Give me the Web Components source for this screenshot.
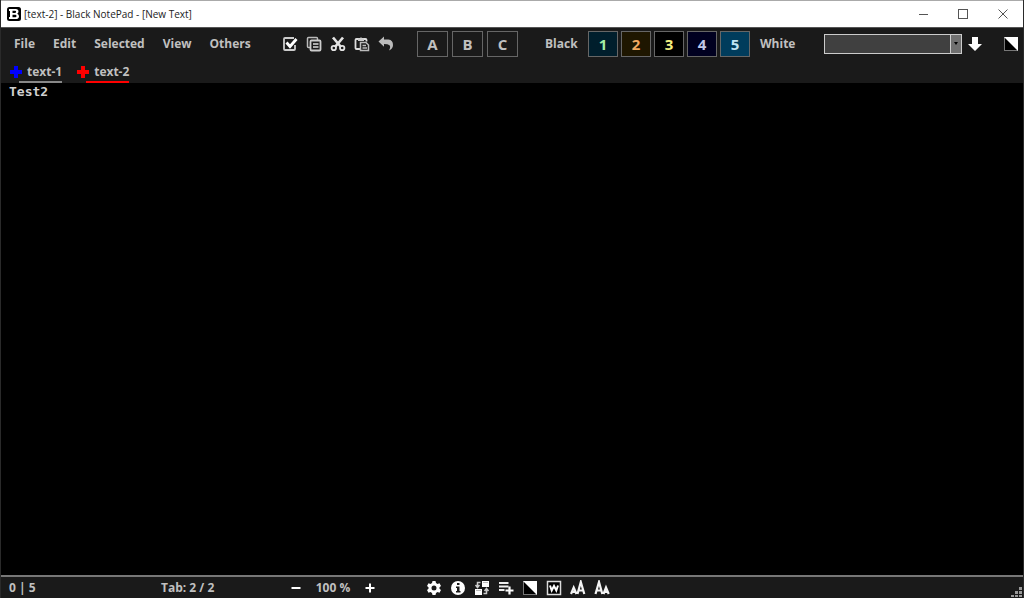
<!DOCTYPE html>
<html lang="en">
<head>
<meta charset="utf-8">
<title>[text-2] - Black NotePad - [New Text]</title>
<style>
html, body { margin: 0; height: 100%; background: #000; }
body { font-family: "Open Sans", "Noto Sans", sans-serif; }
</style>
</head>
<body>
<note-app></note-app>
<script>
const define = (name, html, setup) => customElements.define(name, class extends HTMLElement {
  constructor() {
    super();
    this.attachShadow({ mode: 'open' });
  }
  connectedCallback() {
    this.shadowRoot.innerHTML = html;
    if (setup) setup(this, this.shadowRoot);
  }
});

const ICONS = {
  logo: '<rect x="1" y="1" width="14" height="14" rx="2.500" fill="#000"/><path fill="#fff" fill-rule="evenodd" d="M3 3H9.800q2.700 0 2.700 2.600 0 1.500-1.300 2.200Q13 8.500 13 10.200q0 2.800-3.200 2.800H3v-2h1V5H3zM6.500 4.800v2.100h2.600q1 0 1-1.050T9.100 4.800zM6.500 8.800v2.400h2.800q1.200 0 1.200-1.200T9.300 8.800z"/>',
  check: '<path d="M13 9v4q0 1-1 1H3q-1 0-1-1V3q0-1 1-1h9" fill="none" stroke="#ccc" stroke-width="1.800"/><path d="M4.500 6.500l3.500 4L14.500 3" fill="none" stroke="#fff" stroke-width="2.800"/>',
  copy: '<path d="M4 11.500H2.500q-1 0-1-1V2.500q0-1 1-1h8q1 0 1 1V4" fill="none" stroke="#bbb" stroke-width="1.500"/><rect x="4.500" y="4.500" width="10" height="10" rx="1" fill="none" stroke="#ccc" stroke-width="1.800"/><path d="M7 8h5.500M7 11h5.500" stroke="#ddd" stroke-width="1.500"/>',
  cut: '<g fill="none" stroke="#e4e4e4"><path d="M3 1.500l8 9.500M13 1.500L5 11" stroke-width="2.700"/><circle cx="3.800" cy="12" r="2.200" stroke-width="1.800"/><circle cx="12.200" cy="12" r="2.200" stroke-width="1.800"/></g>',
  paste: '<path d="M6 13H2.500q-1 0-1-1V4q0-1 1-1h9q1 0 1 1v1.500" fill="none" stroke="#ddd" stroke-width="1.800"/><path d="M4 5V2.500h2q1-2.500 2 0h2V5z" fill="#ccc"/><path d="M6.500 6.500h5.500l2.500 2.500v5.500h-8z" fill="#1a1a1a" stroke="#bbb" stroke-width="1.500"/><path d="M8.500 9.500H12M8.500 12H13" stroke="#bbb" stroke-width="1.300"/>',
  undo: '<path d="M.5 5.500L6 .5v3h4.500Q15 4 15 9q0 3.500-4 5.500 2-3.500.5-5.200Q10 8 6 8v2.800z" fill="#bbb"/>',
  down: '<path d="M5 1h6v7h4l-7 7-7-7h4z" fill="#fff"/>',
  contrast: '<rect x="1.500" y="1.500" width="13" height="13" fill="#000" stroke="#777"/><path d="M1 1h14v14z" fill="#fff"/>',
  gear: '<path fill="#fff" fill-rule="evenodd" d="M6.500 1h3l.5 2 1.500.9 2-.6L15 5.900l-1.500 1.300v1.600l1.500 1.300-1.500 2.600-2-.6L10 13l-.5 2h-3L6 13l-1.500-.9-2 .6L1 10.100l1.500-1.300V7.200L1 5.900l1.500-2.600 2 .6L6 3zM8 5.500a2.500 2.500 0 1 0 0 5 2.500 2.500 0 0 0 0-5z"/>',
  info: '<circle cx="8" cy="8" r="7" fill="#fff"/><path d="M7 3h2.500v2H7zM6 6.500h3.500v4.500h1v1.500H6V11h1V8H6z" fill="#1a1a1a"/>',
  swap: '<path d="M8 1h7v6H8zM1 9h7v6H1z" fill="#fff"/><path d="M9 2.500h5M2 10.500h5" stroke="#bbb"/><path d="M6.500 2.500H3.500V7M1.500 5l2 2.500 2-2.500M9.500 13.500h3V9.500M10.500 11l2-2.500 2 2.500" fill="none" stroke="#ccc" stroke-width="1.500"/>',
  add: '<path d="M1 3h9.500M1 6.500h9.500M1 10h5.500" stroke="#eee" stroke-width="2.200"/><path d="M7.500 10.500h8M11.500 6.500v8" stroke="#fff" stroke-width="2.200"/>',
  word: '<rect x="1.500" y="1.500" width="13" height="13" fill="#000" stroke="#ddd" stroke-width="1.500"/><path d="M4 5.500l1.700 5L8 6l2.300 4.500 1.700-5" fill="none" stroke="#fff" stroke-width="2"/>',
  grow: '<path d="M1 14l2.700-6.500L6.500 14M2 12h3.500M7.500 14l3.300-12 3.500 12M8.500 10.500h4.500" fill="none" stroke="#f4f4f4" stroke-width="2.200"/>',
  shrink: '<path d="M1.500 14L5 2l3.300 12M2.500 10.500H7M9.500 14l2.500-6.500 2.700 6.500M10.500 12h3.500" fill="none" stroke="#f4f4f4" stroke-width="2.200"/>',
  plus: '<path d="M8 3.500v9M3.500 8h9" stroke="#fff" stroke-width="2"/>',
  minus: '<path d="M3.500 8h9" stroke="#fff" stroke-width="2"/>',
  cross: '<path d="M8 2v12M2 8h12" stroke="currentColor" stroke-width="4"/>',
  min: '<path d="M4 8.500h9" stroke="#555"/>',
  max: '<rect x="3.500" y="3.500" width="9" height="9" fill="none" stroke="#555"/>',
  close: '<path d="M3.500 3.500l9 9M12.500 3.500l-9 9" stroke="#555"/>',
  grip: '<path d="M12 5h3v3h-3zM8 9h3v3H8zM12 9h3v3h-3zM4 13h3v2H4zM8 13h3v2H8zM12 13h3v2h-3z" fill="#999"/>'
};

define('note-icon', `<style>
:host { display: block; width: 16px; height: 16px; flex: none; }
svg { display: block; }
</style><svg width="16" height="16" viewBox="0 0 16 16" aria-hidden="true"></svg>`,
  (host, root) => { root.querySelector('svg').innerHTML = ICONS[host.getAttribute('name')] || ''; });

define('icon-button', `<style>
:host { display: block; flex: none; }
button { display: block; padding: 0; border: 0; background: none; color: inherit; }
</style><button><note-icon></note-icon></button>`,
  (host, root) => {
    root.querySelector('button').setAttribute('aria-label', host.getAttribute('label'));
    root.querySelector('note-icon').setAttribute('name', host.getAttribute('icon'));
    root.querySelector('note-icon').connectedCallback();
  });

define('menu-item', `<style>
:host { display: block; flex: none; }
button { display: block; padding: 0; border: 0; background: none; color: #c0c0c0; font: 700 12px/20px "Open Sans", "Noto Sans", sans-serif; white-space: nowrap; }
</style><button><slot></slot></button>`);

define('box-button', `<style>
:host { display: block; flex: none; width: 31px; --back: #1a1a1a; --ink: #c0c0c0; }
button { display: block; box-sizing: border-box; width: 100%; height: 26px; padding: 0; border: 1px solid #666; background: var(--back); color: var(--ink); font: 700 15px/24px "Open Sans", "Noto Sans", sans-serif; }
</style><button><slot></slot></button>`);

define('title-bar', `<style>
:host { display: flex; align-items: center; height: 26px; padding: 0 12px 0 5px; border-top: 1px solid #aaa; background: #fff; color: #222; }
h1 { flex: 1; margin: 0 0 0 2px; font: 400 10px/16px "Open Sans", "Noto Sans", sans-serif; }
nav { display: flex; gap: 24px; }
</style><note-icon name="logo"></note-icon><h1><slot></slot></h1>
<nav><icon-button icon="min" label="Minimize"></icon-button><icon-button icon="max" label="Maximize"></icon-button><icon-button icon="close" label="Close"></icon-button></nav>`);

define('tool-bar', `<style>
:host { display: flex; align-items: center; height: 31px; padding: 0 4px 0 13px; border-top: 1px solid #555; background: #1a1a1a; }
div { display: flex; align-items: center; flex: none; }
.menus { gap: 18px; width: 268px; }
.icons { gap: 8px; width: 135px; }
.slots { gap: 4px; width: 128px; }
.themes { gap: 3px; flex: 1 0 auto; }
.themes box-button { width: 30px; }
.name { width: 40px; }
.last { margin-left: 7px; }
.find { width: 138px; height: 20px; box-sizing: border-box; border: 1px solid #ccc; }
input { box-sizing: border-box; flex: 1; min-width: 0; height: 18px; padding: 0 3px; border: 0; background: #404040; color: #ddd; font: 12px/18px "Open Sans", sans-serif; }
.find button { width: 11px; height: 18px; padding: 0; border: 0; border-left: 1px solid #ccc; background: #707070; }
.find svg { display: block; margin: 0 auto; }
.go { margin: 0 20px 0 5px; }
</style>
<div class="menus"><menu-item>File</menu-item><menu-item>Edit</menu-item><menu-item>Selected</menu-item><menu-item>View</menu-item><menu-item>Others</menu-item></div>
<div class="icons"><icon-button icon="check" label="Select all"></icon-button><icon-button icon="copy" label="Copy"></icon-button><icon-button icon="cut" label="Cut"></icon-button><icon-button icon="paste" label="Paste"></icon-button><icon-button icon="undo" label="Undo"></icon-button></div>
<div class="slots"><box-button>A</box-button><box-button>B</box-button><box-button>C</box-button></div>
<div class="themes"><menu-item class="name">Black</menu-item>
<box-button style="--back:#001e2c;--ink:#a5f0a5">1</box-button><box-button style="--back:#1e1600;--ink:#f0a860">2</box-button><box-button style="--back:#000;--ink:#f4f080">3</box-button><box-button style="--back:#000020;--ink:#c0c8e8">4</box-button><box-button style="--back:#003c5c;--ink:#c0e4f4">5</box-button>
<menu-item class="last">White</menu-item></div>
<div class="find"><input aria-label="Find text"><button aria-label="Search history"><svg width="4" height="3"><path d="M0 0h4L2 3z" fill="#000"/></svg></button></div>
<icon-button class="go" icon="down" label="Find next"></icon-button>
<icon-button icon="contrast" label="Invert colours"></icon-button>`);

define('text-tab', `<style>
:host { display: block; flex: none; --mark: #00f; --line: #888; }
button { display: flex; align-items: center; padding: 0; border: 0; background: none; color: #c0c0c0; font: 700 12px/18px "Open Sans", "Noto Sans", sans-serif; }
note-icon { color: var(--mark); margin-right: 3px; }
i { display: block; height: 2px; margin-left: 11px; background: var(--line); }
</style><button><note-icon name="cross"></note-icon><slot></slot></button><i></i>`);

define('tab-strip', `<style>
:host { display: flex; gap: 13px; height: 20px; padding: 4px 7px 0; background: #1a1a1a; }
.on { --mark: #f00; --line: #f00; }
</style><text-tab>text-1</text-tab><text-tab class="on">text-2</text-tab>`);

define('text-editor', `<style>
:host { display: flex; flex: 1; min-height: 0; background: #000; }
textarea { flex: 1; padding: 1px 8px; border: 0; outline: 0; resize: none; background: #000; color: #d0d0d0; font: 700 13px/15px "DejaVu Sans Mono", monospace; }
</style><textarea aria-label="Text" spellcheck="false"></textarea>`,
  (host, root) => { root.querySelector('textarea').value = host.getAttribute('text'); });

define('status-bar', `<style>
:host { display: flex; align-items: center; height: 21px; padding: 0 0 0 8px; border-top: 2px solid #777; background: #1a1a1a; color: #c0c0c0; font: 700 12px/20px "Open Sans", "Noto Sans", sans-serif; }
span { flex: none; }
.count { width: 152px; }
.tab { width: 127px; }
.zoom { display: flex; align-items: center; width: 138px; flex: none; }
.zoom span { width: 58px; text-align: center; }
.icons { display: flex; flex: 1; gap: 8px; }
.grip { align-self: flex-end; }
</style><span class="count">0 | 5</span><span class="tab">Tab: 2 / 2</span>
<div class="zoom"><icon-button icon="minus" label="Zoom out"></icon-button><span>100 %</span><icon-button icon="plus" label="Zoom in"></icon-button></div>
<div class="icons"><icon-button icon="gear" label="Settings"></icon-button><icon-button icon="info" label="About"></icon-button><icon-button icon="swap" label="Swap"></icon-button><icon-button icon="add" label="Add line"></icon-button><icon-button icon="contrast" label="Invert colours"></icon-button><icon-button icon="word" label="Word wrap"></icon-button><icon-button icon="grow" label="Larger text"></icon-button><icon-button icon="shrink" label="Smaller text"></icon-button></div>
<note-icon class="grip" name="grip"></note-icon>`);

define('note-app', `<style>
:host { display: flex; flex-direction: column; height: 100vh; box-sizing: border-box; border-left: 1px solid #2a2a2a; border-right: 1px solid #2a2a2a; }
</style><title-bar>[text-2] - Black NotePad - [New Text]</title-bar><tool-bar></tool-bar><tab-strip></tab-strip><text-editor text="Test2"></text-editor><status-bar></status-bar>`);
</script>
</body>
</html>
